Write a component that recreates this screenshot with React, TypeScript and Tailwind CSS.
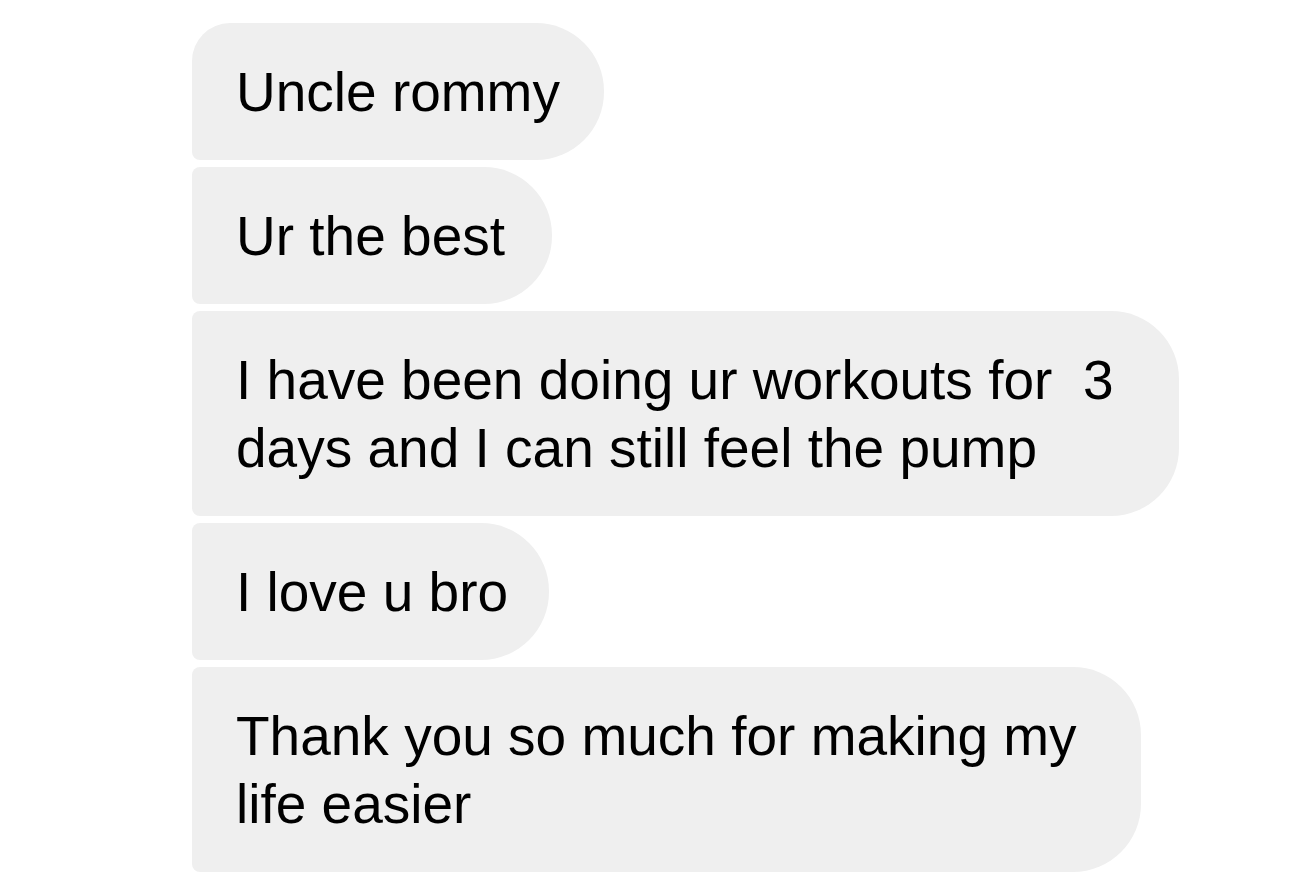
import React from 'react';

type Message = {
  lines: string[];
  shape: string;
};

const MESSAGES: Message[] = [
  { lines: ['Uncle rommy'], shape: 'rounded-tl-[38px] rounded-bl-[8px] pr-[44px]' },
  { lines: ['Ur the best'], shape: 'rounded-l-[8px] pr-[47px]' },
  {
    lines: ['I have been doing ur workouts for\u00a0 3', 'days and I can still feel the pump'],
    shape: 'rounded-l-[8px] pr-[66px]',
  },
  { lines: ['I love u bro'], shape: 'rounded-l-[8px] pr-[41px]' },
  {
    lines: ['Thank you so much for making my', 'life easier'],
    shape: 'rounded-l-[8px] pr-[64px]',
  },
];

function Bubble({ message }: { message: Message }) {
  return (
    <div className={`w-fit bg-[#efefef] text-black rounded-r-[68px] pl-[44px] py-[34.5px] ${message.shape}`}>
      {message.lines.map((line) => (
        <div key={line} className="whitespace-pre">
          {line}
        </div>
      ))}
    </div>
  );
}

export default function App() {
  return (
    <div
      className="min-h-screen bg-white pt-[23px] pl-[192px] text-[55px] leading-[68px]"
      style={{ fontFamily: '"Liberation Sans", Arial, sans-serif' }}
    >
      <div className="flex flex-col gap-[7px]">
        {MESSAGES.map((m, i) => (
          <Bubble key={i} message={m} />
        ))}
      </div>
    </div>
  );
}
